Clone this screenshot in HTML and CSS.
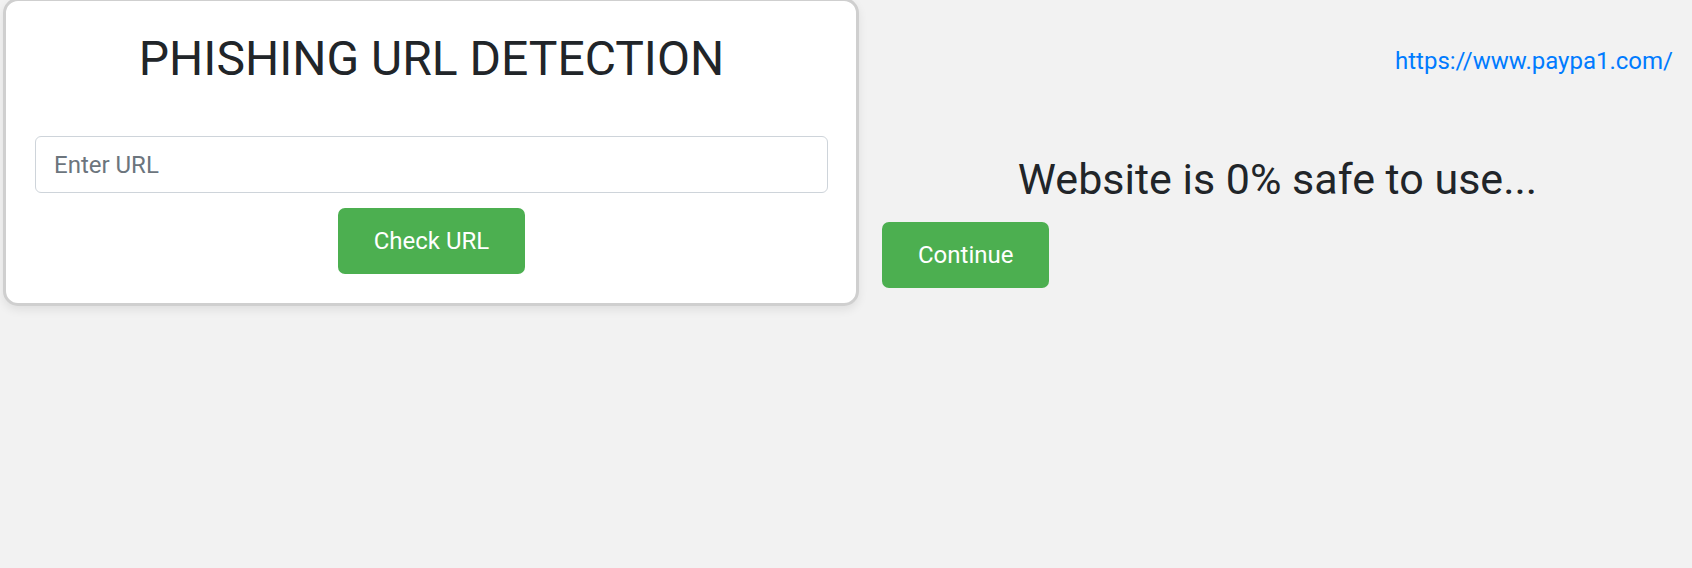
FILE: index.html
```html
<!DOCTYPE html>
<html lang="en">
<head>
<meta charset="utf-8">
<title>Phishing URL Detection</title>
<link rel="stylesheet" href="styles.css">
</head>
<body>
<main class="page">
  <section class="card">
    <h1 class="card-title">PHISHING URL DETECTION</h1>
    <form class="check-form">
      <input class="url-input" type="text" placeholder="Enter URL">
      <button class="btn" type="button">Check URL</button>
    </form>
  </section>
  <section class="result">
    <div class="result-url"><a class="url-link" href="#">https://www.paypa1.com/</a></div>
    <h2 class="result-text">Website is 0% safe to use...</h2>
    <div class="result-actions">
      <button class="btn" type="button">Continue</button>
    </div>
  </section>
</main>
</body>
</html>
```
FILE: styles.css
```css
* { box-sizing: border-box; }
html, body {
  margin: 0;
  padding: 0;
}
body {
  background: #f2f2f2;
  font-family: Roboto, "Liberation Sans", sans-serif;
  color: #212529;
  height: 568px;
  overflow: hidden;
}
.page {
  display: flex;
  align-items: flex-start;
  padding-left: 3px;
}
.card {
  width: 856px;
  flex: none;
  margin-top: -2px;
  background: #fff;
  border: 3px solid #cfcfcf;
  border-radius: 15px;
  box-shadow: 0 4px 10px rgba(0, 0, 0, 0.08);
  padding: 29px 28px 29px 29px;
}
.card-title {
  margin: 0 0 49px;
  font-size: 48px;
  line-height: 57px;
  font-weight: 400;
  text-align: center;
}
.check-form {
  display: flex;
  flex-direction: column;
  align-items: center;
  gap: 15px;
}
.url-input {
  width: 100%;
  height: 57px;
  border: 1px solid #ced4da;
  border-radius: 6px;
  padding: 0 18px;
  font-family: inherit;
  font-size: 24px;
  color: #495057;
  background: #fff;
  outline: none;
}
.url-input::placeholder {
  color: #6c757d;
}
.btn {
  background: #4caf50;
  color: #fff;
  border: none;
  border-radius: 7px;
  font-family: inherit;
  font-size: 24px;
  line-height: 36px;
  padding: 15px 36px;
  cursor: pointer;
}
.result {
  flex: 1;
  display: flex;
  flex-direction: column;
  padding: 46px 19px 0 23px;
}
.result-url {
  text-align: right;
  font-size: 24px;
  line-height: 31px;
}
.url-link {
  color: #007bff;
  text-decoration: none;
}
.result-text {
  margin: 76px 0 17px;
  font-size: 43px;
  line-height: 52px;
  font-weight: 400;
  text-align: center;
}
.result-actions {
  display: flex;
}
```
